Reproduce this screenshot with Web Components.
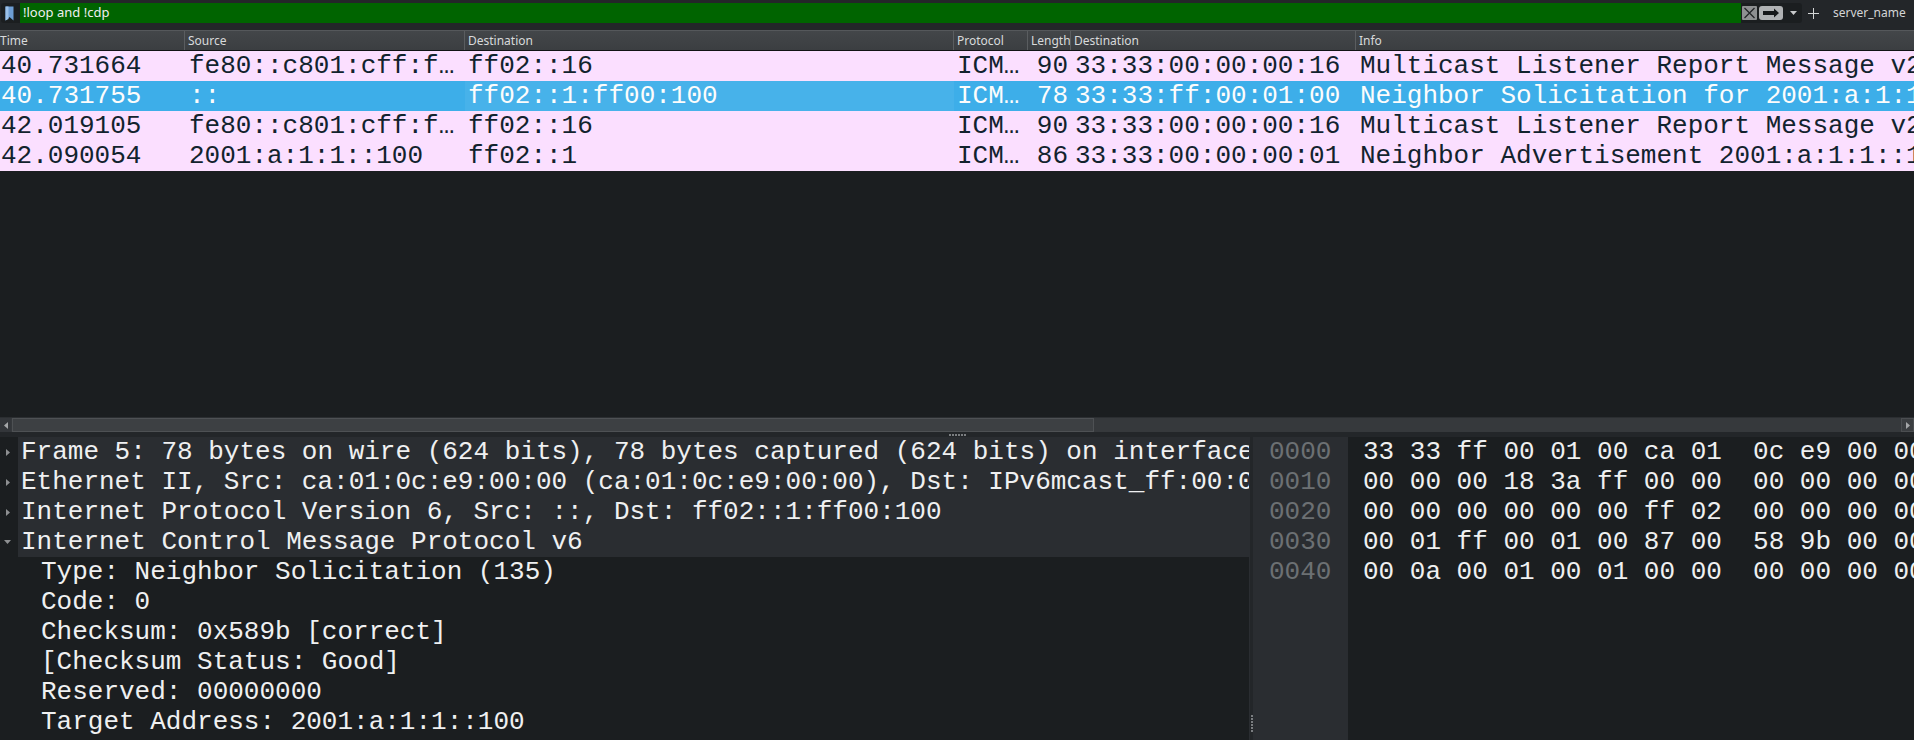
<!DOCTYPE html>
<html>
<head>
<meta charset="utf-8">
<title>Wireshark</title>
<style>
  html, body { margin: 0; height: 100%; background: #1b1e20; overflow: hidden; }
  ws-window { height: 740px; }
</style>
</head>
<body>
<ws-window></ws-window>

<script>
class WsFilterBar extends HTMLElement {
  constructor() {
    super();
    this.attachShadow({ mode: 'open' });
    this.shadowRoot.innerHTML = `
      <style>
        :host {
          display: flex;
          height: 30px;
          box-sizing: border-box;
          padding: 3px 0 0 1px;
          background: #232629;
          font: 13px "Noto Sans", sans-serif;
          color: #eff0f1;
        }
        .box {
          flex: 1;
          display: flex;
          height: 20px;
          background: #1b1e20;
          border-radius: 3px;
          padding-left: 4px;
          align-items: stretch;
        }
        .mark { width: 15px; display: flex; align-items: center; }
        .input {
          flex: 1;
          background: #006400;
          line-height: 19px;
          padding-left: 3px;
          color: #eff0f1;
        }
        .clear { width: 18px; display: flex; padding-left: 1px; box-sizing: border-box; align-items: center; }
        .apply { width: 24px; display: flex; align-items: center; }
        .drop { width: 19px; display: flex; justify-content: center; align-items: center; padding-left: 1px; box-sizing: border-box; }
        .plus { width: 22px; display: flex; justify-content: center; align-items: center; height: 20px; }
        .name { width: 90px; padding-left: 9px; box-sizing: border-box; line-height: 20px; font-size: 12px; color: #d3d5d6; }
      </style>
      <div class="box">
        <div class="mark">
          <svg width="9" height="15" viewBox="0 0 9 15"><path d="M0.5 0.5h8v14l-4-3.5-4 3.5z" fill="#6d9ed4"/><path d="M0.5 0.5h3v12.5l-3 1.5z" fill="#9bc0e8"/></svg>
        </div>
        <div class="input">!loop and !cdp</div>
        <div class="clear">
          <svg width="15" height="14" viewBox="0 0 15 14"><rect width="15" height="14" rx="1" fill="#8e9092"/><path d="M2.5 2l10 10M12.5 2l-10 10" stroke="#232629" stroke-width="1.3"/></svg>
        </div>
        <div class="apply">
          <svg width="24" height="14" viewBox="0 0 24 14"><rect width="24" height="14" rx="3" fill="#b0b2b4"/><path d="M4 5h11V2.500l5 4.500-5 4.500V9H4z" fill="#16181a"/></svg>
        </div>
        <div class="drop">
          <svg width="7" height="4" viewBox="0 0 7 4"><path d="M0 0h7L3.500 4z" fill="#c8cacb"/></svg>
        </div>
      </div>
      <div class="plus">
        <svg width="11" height="11" viewBox="0 0 11 11"><path d="M5.500 0v11M0 5.500h11" stroke="#d3d5d6" stroke-width="1"/></svg>
      </div>
      <div class="name">server_name</div>
    `;
  }
}
customElements.define('ws-filter-bar', WsFilterBar);

const COLS = '185px 280px 489px 74px 43px 285px 1fr';

class WsPacketHeader extends HTMLElement {
  constructor() {
    super();
    this.attachShadow({ mode: 'open' });
    const names = ['Time', 'Source', 'Destination', 'Protocol', 'Length', 'Destination', 'Info'];
    this.shadowRoot.innerHTML = `
      <style>
        :host {
          display: grid;
          grid-template-columns: ${COLS};
          height: 21px;
          box-sizing: border-box;
          background: linear-gradient(#434649, #3b3e41);
          border-top: 1px solid #55585b;
          border-bottom: 1px solid #111315;
          font: 12px "Noto Sans", sans-serif;
          color: #d8dadb;
        }
        div {
          border-right: 1px solid #5a5d60;
          padding-left: 3px;
          line-height: 19px;
          overflow: hidden;
          white-space: nowrap;
        }
        div:first-of-type { padding-left: 0; }
        div:last-of-type { border-right: none; }
      </style>
      ${names.map(n => `<div>${n}</div>`).join('')}
    `;
  }
}
customElements.define('ws-packet-header', WsPacketHeader);

class WsPacketRow extends HTMLElement {
  constructor() {
    super();
    this.attachShadow({ mode: 'open' });
    this.shadowRoot.innerHTML = `
      <style>
        :host {
          display: grid;
          grid-template-columns: ${COLS};
          height: 30px;
          background: #fbdfff;
          color: #12232e;
          font: 26px/30px "Liberation Mono", monospace;
        }
        :host([selected]) { background: #3daee9; color: #fcfcfc; }
        div { overflow: hidden; padding-left: 4px; white-space: pre; }
        .time { padding-left: 1px; }
        .len { text-align: right; padding: 0 3px 0 0; }
        .cur, .proto { padding-left: 3px; }
        :host([selected]) .cur { background: #47b2ea; }
      </style>
      <div class="time"></div>
      <div></div>
      <div class="cur"></div>
      <div class="proto"></div>
      <div class="len"></div>
      <div></div>
      <div></div>
    `;
  }

  connectedCallback() {
    const cells = this.shadowRoot.querySelectorAll('div');
    JSON.parse(this.getAttribute('cells')).forEach((text, i) => {
      cells[i].textContent = text;
    });
  }
}
customElements.define('ws-packet-row', WsPacketRow);

class WsScrollbar extends HTMLElement {
  constructor() {
    super();
    this.attachShadow({ mode: 'open' });
    this.shadowRoot.innerHTML = `
      <style>
        :host {
          display: flex;
          height: 15px;
          box-sizing: border-box;
          background: #36393c;
          border-top: 1px solid #2b2e31;
          align-items: stretch;
        }
        .btn { width: 11px; display: flex; align-items: center; justify-content: center; background: #33363a; }
        .btn.end { box-sizing: border-box; width: 13px; border: 1px solid #4b4e51; background: #3b3e41; }
        .thumb {
          width: 1082px;
          box-sizing: border-box;
          border: 1px solid #4e5154;
          background: #3d4043;
          margin-left: 1px;
        }
        .rest { flex: 1; }
      </style>
      <div class="btn"><svg width="4" height="7" viewBox="0 0 4 7"><path d="M4 0v7L0 3.500z" fill="#a5a7a9"/></svg></div>
      <div class="thumb"></div>
      <div class="rest"></div>
      <div class="btn end"><svg width="4" height="7" viewBox="0 0 4 7"><path d="M0 0v7l4-3.500z" fill="#a5a7a9"/></svg></div>
    `;
  }
}
customElements.define('ws-scrollbar', WsScrollbar);

class WsPacketList extends HTMLElement {
  constructor() {
    super();
    this.attachShadow({ mode: 'open' });
    const rows = [
      ['40.731664', 'fe80::c801:cff:f\u2026', 'ff02::16', 'ICM\u2026', '90', '33:33:00:00:00:16', 'Multicast Listener Report Message v2'],
      ['40.731755', '::', 'ff02::1:ff00:100', 'ICM\u2026', '78', '33:33:ff:00:01:00', 'Neighbor Solicitation for 2001:a:1:1::100'],
      ['42.019105', 'fe80::c801:cff:f\u2026', 'ff02::16', 'ICM\u2026', '90', '33:33:00:00:00:16', 'Multicast Listener Report Message v2'],
      ['42.090054', '2001:a:1:1::100', 'ff02::1', 'ICM\u2026', '86', '33:33:00:00:00:01', 'Neighbor Advertisement 2001:a:1:1::100']
    ];
    this.shadowRoot.innerHTML = `
      <style>
        :host { display: flex; flex-direction: column; height: 402px; background: #1b1e20; }
        .rows { flex: 1; }
      </style>
      <ws-packet-header></ws-packet-header>
      <div class="rows"></div>
      <ws-scrollbar></ws-scrollbar>
    `;
    const box = this.shadowRoot.querySelector('.rows');
    rows.forEach((cells, i) => {
      const row = document.createElement('ws-packet-row');
      row.setAttribute('cells', JSON.stringify(cells));
      if (i === 1) row.setAttribute('selected', '');
      box.appendChild(row);
    });
  }
}
customElements.define('ws-packet-list', WsPacketList);

class WsDetailTree extends HTMLElement {
  constructor() {
    super();
    this.attachShadow({ mode: 'open' });
    const closed = '<svg width="4" height="7" viewBox="0 0 4 7"><path d="M0 0v7l4-3.500z" fill="#8e9092"/></svg>';
    const open = '<svg width="7" height="4" viewBox="0 0 7 4"><path d="M0 0h7L3.500 4z" fill="#8e9092"/></svg>';
    const top = [
      [closed, 'Frame 5: 78 bytes on wire (624 bits), 78 bytes captured (624 bits) on interface 0'],
      [closed, 'Ethernet II, Src: ca:01:0c:e9:00:00 (ca:01:0c:e9:00:00), Dst: IPv6mcast_ff:00:01 (33:33:ff:00:01:00)'],
      [closed, 'Internet Protocol Version 6, Src: ::, Dst: ff02::1:ff00:100'],
      [open, 'Internet Control Message Protocol v6']
    ];
    const kids = [
      'Type: Neighbor Solicitation (135)',
      'Code: 0',
      'Checksum: 0x589b [correct]',
      '[Checksum Status: Good]',
      'Reserved: 00000000',
      'Target Address: 2001:a:1:1::100'
    ];
    this.shadowRoot.innerHTML = `
      <style>
        :host {
          display: block;
          width: 1249px;
          overflow: hidden;
          font: 26px/30px "Liberation Mono", monospace;
          color: #eff0f1;
        }
        .row { display: flex; height: 30px; }
        .arrow { width: 18px; flex: none; display: flex; align-items: center; justify-content: center; padding-right: 3px; box-sizing: border-box; }
        .text { flex: 1; overflow: hidden; background: #2a2d31; padding-left: 3px; white-space: pre; }
        .kid { padding-left: 41px; height: 30px; white-space: pre; }
      </style>
      ${top.map(([icon, text]) => `<div class="row"><div class="arrow">${icon}</div><div class="text">${text}</div></div>`).join('')}
      ${kids.map(text => `<div class="kid">${text}</div>`).join('')}
    `;
  }
}
customElements.define('ws-detail-tree', WsDetailTree);

class WsHexView extends HTMLElement {
  constructor() {
    super();
    this.attachShadow({ mode: 'open' });
    const lines = [
      ['0000', '33 33 ff 00 01 00 ca 01  0c e9 00 00 86 dd 60 00'],
      ['0010', '00 00 00 18 3a ff 00 00  00 00 00 00 00 00 00 00'],
      ['0020', '00 00 00 00 00 00 ff 02  00 00 00 00 00 00 00 00'],
      ['0030', '00 01 ff 00 01 00 87 00  58 9b 00 00 00 00 20 01'],
      ['0040', '00 0a 00 01 00 01 00 00  00 00 00 00 01 00']
    ];
    this.shadowRoot.innerHTML = `
      <style>
        :host {
          display: flex;
          flex: 1;
          min-width: 0;
          overflow: hidden;
          font: 26px/30px "Liberation Mono", monospace;
        }
        .off { width: 95px; flex: none; box-sizing: border-box; background: #2a2d31; color: #6c7073; padding-left: 16px; white-space: pre; }
        .hex { flex: 1; padding-left: 15px; color: #eff0f1; white-space: pre; }
      </style>
      <div class="off">${lines.map(l => l[0]).join('\n')}</div>
      <div class="hex">${lines.map(l => l[1]).join('\n')}</div>
    `;
  }
}
customElements.define('ws-hex-view', WsHexView);

class WsWindow extends HTMLElement {
  constructor() {
    super();
    this.attachShadow({ mode: 'open' });
    this.shadowRoot.innerHTML = `
      <style>
        :host { display: flex; flex-direction: column; background: #1b1e20; overflow: hidden; }
        .handle-h {
          height: 5px;
          display: flex;
          justify-content: center;
          align-items: center;
          gap: 1px;
          background: #232629;
        }
        .handle-h i, .handle-v i { display: block; width: 2px; height: 2px; background: #7a7d80; }
        .bottom { flex: 1; display: flex; min-height: 0; }
        .handle-v {
          width: 4px;
          flex: none;
          background: #232629;
          border-left: 1px solid #2a2d31;
          box-sizing: border-box;
          display: flex;
          flex-direction: column;
          justify-content: flex-end;
          align-items: center;
          gap: 1px;
          padding-bottom: 8px;
        }
      </style>
      <ws-filter-bar></ws-filter-bar>
      <ws-packet-list></ws-packet-list>
      <div class="handle-h"><i></i><i></i><i></i><i></i><i></i><i></i></div>
      <div class="bottom">
        <ws-detail-tree></ws-detail-tree>
        <div class="handle-v"><i></i><i></i><i></i><i></i><i></i><i></i></div>
        <ws-hex-view></ws-hex-view>
      </div>
    `;
  }
}
customElements.define('ws-window', WsWindow);
</script>
</body>
</html>
